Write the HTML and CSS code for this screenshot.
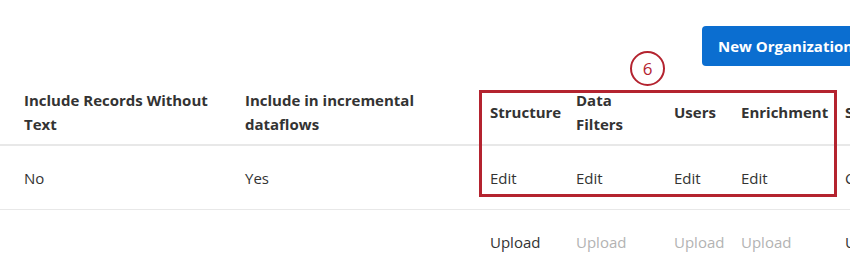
FILE: index.html
```html
<!DOCTYPE html>
<html>
<head>
<meta charset="utf-8">
<link rel="stylesheet" href="styles.css">
</head>
<body>
<div class="page">
  <div class="toolbar">
    <button class="btn-primary">New Organization</button>
  </div>
  <div class="table">
    <div class="row head">
      <div class="cell">Include Records Without Text</div>
      <div class="cell">Include in incremental dataflows</div>
      <div class="cell">Structure</div>
      <div class="cell">Data Filters</div>
      <div class="cell">Users</div>
      <div class="cell">Enrichment</div>
      <div class="cell">Sentiment</div>
    </div>
    <div class="row body">
      <div class="cell">No</div>
      <div class="cell">Yes</div>
      <div class="cell">Edit</div>
      <div class="cell">Edit</div>
      <div class="cell">Edit</div>
      <div class="cell">Edit</div>
      <div class="cell">Configure</div>
    </div>
    <div class="row body tall">
      <div class="cell"></div>
      <div class="cell"></div>
      <div class="cell">Upload</div>
      <div class="cell muted">Upload</div>
      <div class="cell muted">Upload</div>
      <div class="cell muted">Upload</div>
      <div class="cell">Upload</div>
    </div>
  </div>
  <div class="callout-box"></div>
  <div class="callout-num">6</div>
</div>
</body>
</html>
```

FILE: styles.css
```css
html, body {
  margin: 0;
  padding: 0;
  background: #ffffff;
  overflow: hidden;
}
.page {
  position: relative;
  width: 850px;
  height: 274px;
  overflow: hidden;
  font-family: "Open Sans", "Noto Sans", sans-serif;
  color: #333333;
}
.toolbar {
  display: flex;
  padding: 26px 0 0 702px;
  height: 40px;
}
.btn-primary {
  flex: none;
  height: 40px;
  padding: 0 16px;
  border: none;
  border-radius: 4px;
  background: #0b6ed0;
  color: #ffffff;
  font-family: inherit;
  font-weight: 700;
  font-size: 15px;
  white-space: nowrap;
}
.table {
  margin-top: 12px;
  width: 1000px;
}
.row {
  display: grid;
  grid-template-columns: 221px 245px 86px 98px 67px 104px 1fr;
  padding-left: 24px;
  align-items: center;
}
.row.head {
  padding-top: 10px;
  padding-bottom: 8px;
  min-height: 48px;
  border-bottom: 2px solid #e8e8e8;
  font-weight: 700;
}
.row.body {
  height: 63px;
  border-bottom: 1px solid #e8e8e8;
}
.row.body.tall {
  height: 63px;
  padding-bottom: 12px;
  align-items: start;
  padding-top: 20px;
  box-sizing: border-box;
  height: 76px;
}
.cell {
  font-size: 15px;
  line-height: 24px;
  padding-right: 12px;
  white-space: normal;
}
.muted {
  color: #b3b3b3;
}
.callout-box {
  position: absolute;
  left: 479px;
  top: 90px;
  width: 352px;
  height: 101px;
  border: 3px solid #b4232f;
}
.callout-num {
  position: absolute;
  left: 630px;
  top: 51px;
  width: 31px;
  height: 31px;
  border: 2.5px solid #b4232f;
  border-radius: 50%;
  color: #b4232f;
  font-size: 17px;
  line-height: 31px;
  text-align: center;
}
```
